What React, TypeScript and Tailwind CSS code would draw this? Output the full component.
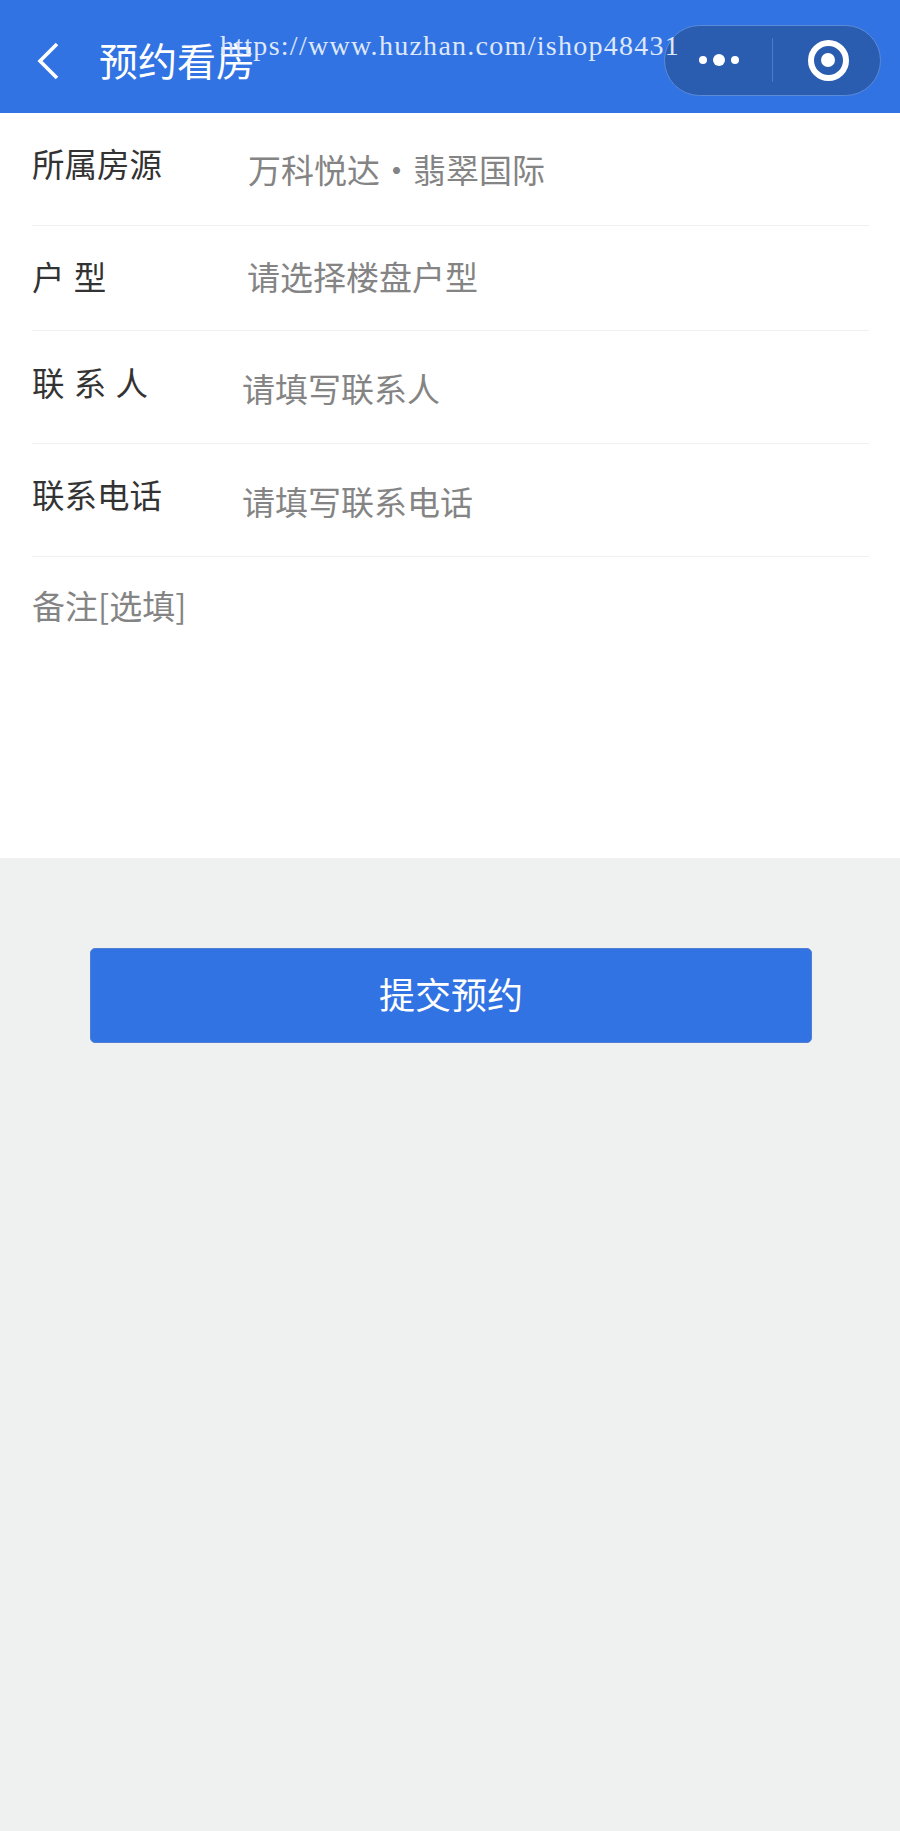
const sans = "font-['Noto_Sans_CJK_SC','Noto_Sans',sans-serif]";

export default function App() {
  return (
    <div className={`relative flex min-h-[1831px] w-[900px] flex-col bg-[#eff0f0] ${sans}`}>
      <header className="relative flex h-[113px] items-center bg-[#3273e3] pl-[36px] pr-[19px] text-white">
        <svg width="24" height="38" viewBox="0 0 24 38" fill="none" stroke="currentColor" strokeWidth="3.6" className="mt-[9px]">
          <path d="M21 2 4 19l17 17" />
        </svg>
        <h1 className="ml-[39px] mt-[4px] text-[39px] leading-[50px] font-normal">预约看房</h1>
        <div className="ml-auto mt-[7px] flex h-[71px] w-[217px] items-center rounded-full border border-[#5a8ad8] bg-[#2a5db0]">
          <div className="flex w-[107px] items-center justify-center gap-[6px]">
            <span className="size-[8px] rounded-full bg-white" />
            <span className="size-[12px] rounded-full bg-white" />
            <span className="size-[8px] rounded-full bg-white" />
          </div>
          <div className="h-[44px] w-px bg-[#4a7cc8]" />
          <div className="flex flex-1 items-center justify-center pl-[3px]">
            <div className="flex size-[41px] items-center justify-center rounded-full border-[6px] border-white">
              <span className="size-[14px] rounded-full bg-white" />
            </div>
          </div>
        </div>
        <div className="absolute left-[220px] top-[26px] whitespace-nowrap font-['Liberation_Serif',serif] text-[28px] leading-[40px] tracking-[1.27px] text-[#dfe8fa]">
          https://www.huzhan.com/ishop48431
        </div>
      </header>

      <main className="bg-white">
        <div className="ml-[32px] mr-[31px] flex h-[113px] border-b border-[#f1f1f1]">
          <div className="mt-[28px] w-[216px] text-[32.5px] leading-[44px] text-[#333333]">所属房源</div>
          <div className="mt-[33px] text-[33px] leading-[46px] text-[#848484]">万科悦达・翡翠国际</div>
        </div>
        <div className="ml-[32px] mr-[31px] flex h-[105px] border-b border-[#f1f1f1]">
          <div className="mt-[28px] w-[215px] text-[32.5px] leading-[44px] whitespace-pre text-[#333333] [word-spacing:2px]">户 型</div>
          <div className="mt-[27px] text-[33px] leading-[46px] text-[#848484]">请选择楼盘户型</div>
        </div>
        <div className="ml-[32px] mr-[31px] flex h-[113px] border-b border-[#f1f1f1]">
          <div className="mt-[29px] w-[210px] text-[32.5px] leading-[44px] whitespace-pre text-[#333333] [word-spacing:2px]">联 系 人</div>
          <div className="mt-[34px] text-[33px] leading-[46px] text-[#848484]">请填写联系人</div>
        </div>
        <div className="ml-[32px] mr-[31px] flex h-[113px] border-b border-[#f1f1f1]">
          <div className="mt-[28px] w-[210px] text-[32.5px] leading-[44px] text-[#333333]">联系电话</div>
          <div className="mt-[34px] text-[33px] leading-[46px] text-[#848484]">请填写联系电话</div>
        </div>
        <div className="mx-[32px] h-[301px] pt-[25px] text-[33px] leading-[46px] text-[#848484]">备注[选填]</div>
      </main>

      <div className="px-[90px] pt-[90px]">
        <button className="flex h-[95px] w-[722px] items-center justify-center rounded-[5px] border border-[#4f7fd2] bg-[#3273e3] pb-[6px] text-[36px] text-white">
          提交预约
        </button>
      </div>
    </div>
  );
}
